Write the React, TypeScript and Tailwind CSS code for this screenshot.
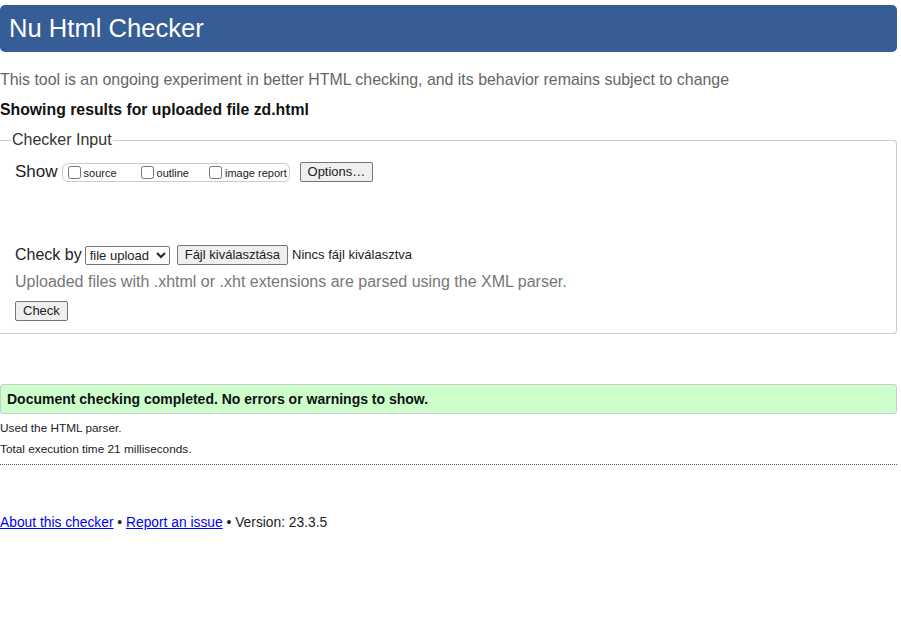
import React from "react";

const App = () => {
  return (
    <div className="min-h-[621px] w-[901px] bg-white font-['Liberation_Sans',Arial,sans-serif] text-[#222]">
      <div className="pr-[4px] pt-[5px]">
        {/* header */}
        <header className="flex h-[47px] items-center rounded-[5px] bg-[#365d95] pl-[9px]">
          <h1 className="text-[25.6px] leading-none text-white">Nu Html Checker</h1>
        </header>

        <p className="mt-[19px] text-[15.9px] leading-[18px] text-[#666]">
          This tool is an ongoing experiment in better HTML checking, and its behavior remains subject to change
        </p>
        <p className="mt-[12px] text-[15.8px] font-bold leading-[18px] text-[#111]">
          Showing results for uploaded file zd.html
        </p>

        {/* checker input */}
        <fieldset className="mt-[12px] h-[203px] rounded-r-[4px] border-y border-r border-[#ccc]">
          <legend className="ml-[11px] px-[1px] text-[16px] leading-[18px] text-[#333]">Checker Input</legend>

          <div className="pl-[15px]">
            <div className="mt-[13px] flex items-center">
              <span className="text-[17px] leading-[20px]">Show</span>
              <div className="ml-[4px] flex h-[19px] w-[228px] items-center rounded-[6px] border border-[#ccc] pl-[5px] text-[11px]">
                <label className="flex items-center">
                  <input type="checkbox" className="h-[13px] w-[13px]" />
                  <span className="ml-[3px] mt-[3px]">source</span>
                </label>
                <label className="ml-[24px] flex items-center">
                  <input type="checkbox" className="h-[13px] w-[13px]" />
                  <span className="ml-[3px] mt-[3px]">outline</span>
                </label>
                <label className="ml-[20px] flex items-center">
                  <input type="checkbox" className="h-[13px] w-[13px]" />
                  <span className="ml-[3px] mt-[3px]">image report</span>
                </label>
              </div>
              <button className="ml-[10px] h-[20px] rounded-[2px] border border-[#767676] bg-[#efefef] px-[7px] text-[13px] leading-[18px]">
                Options…
              </button>
            </div>

            <div className="mt-[63px] flex items-center">
              <span className="text-[16px] leading-[20px]">Check by</span>
              <select className="ml-[3px] h-[19px] w-[85px] rounded-[2px] border border-[#767676] bg-white text-[13px] leading-[17px]">
                <option>file upload</option>
              </select>
              <button className="ml-[7px] h-[20px] rounded-[2px] border border-[#767676] bg-[#efefef] px-[7px] text-[13px] leading-[18px]">
                Fájl kiválasztása
              </button>
              <span className="ml-[4px] text-[13px]">Nincs fájl kiválasztva</span>
            </div>

            <p className="mt-[8px] text-[16px] leading-[18px] text-[#777]">
              Uploaded files with .xhtml or .xht extensions are parsed using the XML parser.
            </p>

            <button className="mt-[10px] h-[20px] rounded-[2px] border border-[#767676] bg-[#efefef] px-[7px] text-[13px] leading-[18px]">
              Check
            </button>
          </div>
        </fieldset>

        {/* result */}
        <div className="mt-[50px] flex h-[30px] items-center rounded-[3px] border border-[#ccc] bg-[#ccffcc] pl-[6px]">
          <p className="text-[14px] font-bold text-[#111]">Document checking completed. No errors or warnings to show.</p>
        </div>

        <p className="mt-[7px] text-[11.8px] leading-[14px]">Used the HTML parser.</p>
        <p className="mt-[7px] text-[11.8px] leading-[14px]">Total execution time 21 milliseconds.</p>
        <div className="mt-[8px] border-t border-dotted border-[#555]" />

        <p className="mt-[50px] text-[13.8px] leading-[16px] text-[#222]">
          <a href="#" className="text-[#0000ee] underline">About this checker</a> •{" "}
          <a href="#" className="text-[#0000ee] underline">Report an issue</a> • Version: 23.3.5
        </p>
      </div>
    </div>
  );
};

export default App;
